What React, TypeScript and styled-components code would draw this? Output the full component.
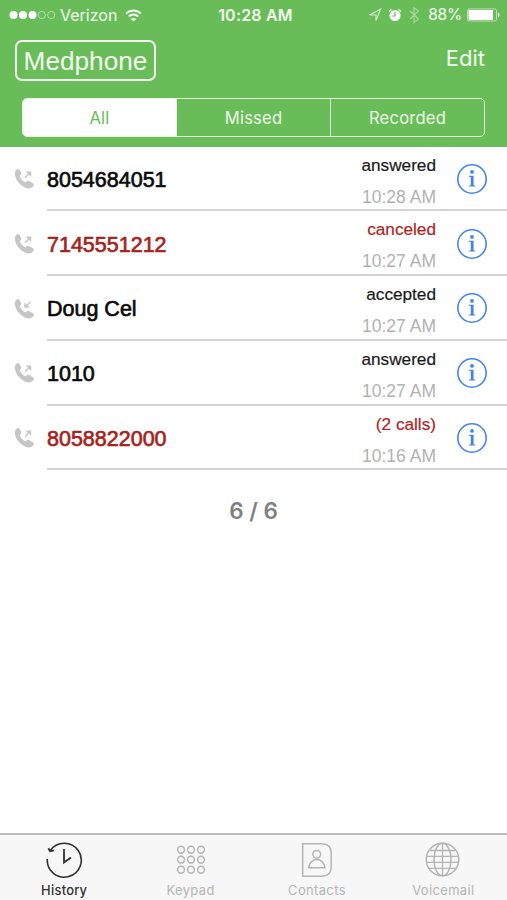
import React from 'react';
import styled, { createGlobalStyle } from 'styled-components';

const green = '#69bd58';

const GlobalStyle = createGlobalStyle`
  * { box-sizing: border-box; }
  body { margin: 0; background: #fff; }
`;

const Screen = styled.div`
  width: 507px;
  height: 900px;
  display: flex;
  flex-direction: column;
  overflow: hidden;
  background: #fff;
  font-family: Inter, sans-serif;
`;

const Header = styled.header`
  height: 146.5px;
  flex: none;
  background: ${green};
  color: #f4fbf1;
`;

const StatusBar = styled.div`
  height: 30px;
  display: grid;
  grid-template-columns: 1fr auto 1fr;
  align-items: center;
  padding: 0 7px 0 9px;
  font-size: 16px;
  line-height: 30px;
`;

const Carrier = styled.div`
  display: flex;
  align-items: center;
`;

const Signal = styled.svg`
  margin-right: 4px;
`;

const Wifi = styled.svg`
  margin-left: 8px;
`;

const Clock = styled.div`
  font-weight: 600;
  font-size: 16px;
  letter-spacing: 0.2px;
  padding: 0 0 0 2px;
`;

const Indicators = styled.div`
  display: flex;
  align-items: center;
  justify-content: flex-end;
`;

const LocationIcon = styled.svg`
  margin-right: 2px;
`;

const Percent = styled.span`
  font-size: 15.5px;
  letter-spacing: -0.2px;
  line-height: 30px;
  margin: 0 5px 0 6px;
`;

const TitleRow = styled.div`
  height: 67.5px;
  display: flex;
  justify-content: space-between;
  padding: 10px 22px 0 15px;
`;

const Brand = styled.div`
  width: 141px;
  height: 41px;
  border: 2px solid #f4fbf1;
  border-radius: 7px;
  font: 26.2px/38px 'Liberation Sans', sans-serif;
  text-align: center;
`;

const EditButton = styled.button`
  height: 36px;
  padding: 0;
  border: 0;
  background: none;
  color: inherit;
  font: 22px/36px Inter, sans-serif;
`;

const Segments = styled.div`
  display: grid;
  grid-template-columns: 153px 154px 1fr;
  width: 463px;
  height: 39.5px;
  margin-left: 22px;
  border: 1.5px solid #e6f5e1;
  border-radius: 5px;
  overflow: hidden;
`;

const Segment = styled.button<{ $active?: boolean }>`
  border: 0;
  border-left: ${p => (p.$active ? '0' : '1px solid #e6f5e1')};
  padding: 1px 0 0;
  background: ${p => (p.$active ? '#fff' : 'transparent')};
  color: ${p => (p.$active ? green : '#eef9ea')};
  font: 16.6px/37px Inter, sans-serif;
  letter-spacing: 0.2px;
`;

const CallList = styled.main`
  flex: 1;
`;

const Call = styled.div`
  height: 64.75px;
  display: flex;
  padding-left: 13px;
`;

const Direction = styled.svg`
  flex: none;
  margin: 20.5px 12px 0 0;
`;

const Details = styled.div`
  flex: 1;
  display: flex;
  align-items: center;
  border-bottom: 2px solid #d4d4d4;
  padding-right: 19px;
  font-family: 'Liberation Sans', sans-serif;
`;

const Name = styled.div<{ $alert?: boolean }>`
  flex: 1;
  padding-top: 5px;
  color: ${p => (p.$alert ? '#a8211b' : '#0a0a0a')};
  font-size: 21.5px;
  -webkit-text-stroke: 0.65px currentColor;
`;

const Meta = styled.div`
  height: 100%;
  padding-top: 2px;
  text-align: right;
  margin-right: 20px;
`;

const Status = styled.div<{ $alert?: boolean }>`
  font-size: 17.2px;
  line-height: 32px;
  color: ${p => (p.$alert ? '#b0241f' : '#1a1a1a')};
  -webkit-text-stroke: 0.2px currentColor;
`;

const Time = styled.div`
  font-size: 17.5px;
  line-height: 33px;
  color: #b2b2b2;
`;

const Info = styled.svg`
  margin-top: 2px;
`;

const Count = styled.div`
  margin-top: 27px;
  text-align: center;
  font-weight: 600;
  font-size: 22.5px;
  line-height: 28px;
  color: #808080;
`;

const TabBar = styled.nav`
  height: 67.5px;
  flex: none;
  display: grid;
  grid-template-columns: repeat(4, 126.4px);
  padding-left: 1px;
  border-top: 2.5px solid #bdbdbd;
  background: #f7f7f7;
`;

const Tab = styled.div<{ $active?: boolean }>`
  display: flex;
  flex-direction: column;
  align-items: center;
  padding-top: 5px;
  color: ${p => (p.$active ? '#303030' : '#b5b5b5')};
  font-size: 12.9px;
  font-weight: ${p => (p.$active ? 500 : 400)};
  line-height: 18px;
  letter-spacing: ${p => (p.$active ? '0.25px' : '0.4px')};
`;

const TabIcon = styled.svg`
  width: 40px;
  height: 40px;
  flex: none;
  margin-bottom: 2px;
  fill: none;
  stroke: currentColor;
  stroke-width: 1.5;
`;

function CallIcon({ incoming }: { incoming?: boolean }) {
  return (
    <Direction width="22" height="23" viewBox="0 0 22 23">
      <path
        fill="#c6c6c6"
        d="M3.2 2.2C4.3 1.3 5.3 1.7 6 3l1.3 2.5c.5 1 .2 1.8-.6 2.5l-.8.7c.7 2.7 3 5.1 5.8 6.4l.9-1c.7-.8 1.5-1 2.5-.4l4 2.3c1 .6 1.3 1.4.6 2.4-1.2 2-3.2 3.1-5.5 2.7C7.6 20.2 1.3 13 1 6.3 1 4.5 1.8 3.2 3.2 2.2z"
        transform="translate(.8 .3)"
      />
      {incoming ? (
        <g transform="translate(.5 .2)">
          <path d="M17 4.5l-4 4" stroke="#c6c6c6" strokeWidth="1.5" />
          <path d="M10.8 5v5.5h5.5z" fill="#c6c6c6" />
        </g>
      ) : (
        <g transform="translate(.5 .5)">
          <path d="M11.5 10.3l4-4" stroke="#c6c6c6" strokeWidth="1.5" />
          <path d="M12.2 4H17.7V9.5z" fill="#c6c6c6" />
        </g>
      )}
    </Direction>
  );
}

function InfoIcon() {
  return (
    <Info width="32" height="32" viewBox="0 0 32 32">
      <circle cx="16" cy="16" r="14.2" fill="none" stroke="#4285ea" strokeWidth="1.6" />
      <circle cx="16" cy="8.9" r="1.9" fill="#4285ea" />
      <path d="M12.7 12.8h4.9v9.5l1.8.5v.8h-6.6v-.8l2-.5v-8.3l-2.1-.4z" fill="#4285ea" />
    </Info>
  );
}

const calls = [
  { name: '8054684051', status: 'answered', time: '10:28 AM' },
  { name: '7145551212', status: 'canceled', time: '10:27 AM', alert: true },
  { name: 'Doug Cel', status: 'accepted', time: '10:27 AM', incoming: true },
  { name: '1010', status: 'answered', time: '10:27 AM' },
  { name: '8058822000', status: '(2 calls)', time: '10:16 AM', alert: true },
];

export default function App() {
  return (
    <>
      <GlobalStyle />
      <Screen>
        <Header>
          <StatusBar>
            <Carrier>
              <Signal width="47" height="10" viewBox="0 0 47 10">
                {[4.5, 14, 23.5].map(x => <circle key={x} cx={x} cy="5" r="4" fill="#fff" />)}
                {[32.8, 42.2].map(x => (
                  <circle key={x} cx={x} cy="5" r="3.6" fill="none" stroke="#c5e7bd" strokeWidth=".8" />
                ))}
              </Signal>
              Verizon
              <Wifi width="17" height="13" viewBox="0 0 17 13" fill="none" stroke="#f4fbf1" strokeWidth="2">
                <path d="M1 4.6c4.5-4 10.5-4 15 0M3.7 7.6c2.9-2.5 6.7-2.5 9.6 0" />
                <path d="M8.5 12.5L5.8 9.9c1.6-1.3 3.8-1.3 5.4 0z" fill="#f4fbf1" stroke="none" />
              </Wifi>
            </Carrier>
            <Clock>10:28 AM</Clock>
            <Indicators>
              <LocationIcon width="14" height="14" viewBox="0 0 14 14" fill="none" stroke="#d5efcf" strokeWidth="1.1">
                <path d="M12.5 1.2L8 12.5V7H1.5z" />
              </LocationIcon>
              <svg width="18" height="16" viewBox="0 0 18 16">
                <circle cx="11" cy="8.5" r="5.6" fill="#f8fdf6" />
                <path d="M5 4.5l2.5-2.3M14.5 2.2L17 4.5" stroke="#e5f5e1" strokeWidth="1.3" />
                <path d="M11 5v4H8.5" fill="none" stroke={green} strokeWidth="1.2" />
              </svg>
              <svg width="20" height="18" viewBox="0 0 20 18" fill="none" stroke="#a9daa0" strokeWidth="1.1">
                <path d="M8 5l8.5 8L12 16.5v-15L16.5 5 8 13" />
              </svg>
              <Percent>88%</Percent>
              <svg width="33" height="14" viewBox="0 0 33 14">
                <rect x=".5" y="1" width="29" height="12" rx="1.5" fill="none" stroke="#b9e0b1" />
                <rect x="1.5" y="2" width="24.5" height="10" fill="#fff" />
                <path d="M31 4.5c2 1 2 4 0 5z" fill="#f4fbf1" />
              </svg>
            </Indicators>
          </StatusBar>
          <TitleRow>
            <Brand>Medphone</Brand>
            <EditButton>Edit</EditButton>
          </TitleRow>
          <Segments>
            <Segment $active>All</Segment>
            <Segment>Missed</Segment>
            <Segment>Recorded</Segment>
          </Segments>
        </Header>
        <CallList>
          {calls.map(call => (
            <Call key={call.name}>
              <CallIcon incoming={call.incoming} />
              <Details>
                <Name $alert={call.alert}>{call.name}</Name>
                <Meta>
                  <Status $alert={call.alert}>{call.status}</Status>
                  <Time>{call.time}</Time>
                </Meta>
                <InfoIcon />
              </Details>
            </Call>
          ))}
          <Count>6 / 6</Count>
        </CallList>
        <TabBar>
          <Tab $active>
            <TabIcon viewBox="0 0 40 40">
              <path d="M3.3 19A17 17 0 1 0 6.5 10.2" strokeWidth="1.6" />
              <path d="M4.3 8.3l1.8 3 3.8-1M20 9v13.5l7-5" strokeWidth="1.8" />
            </TabIcon>
            History
          </Tab>
          <Tab>
            <TabIcon viewBox="0 0 40 40">
              {[9.7, 19.7, 29.7].map(y => [10, 20, 30].map(x => <circle key={`${x}-${y}`} cx={x} cy={y} r="3.4" />))}
            </TabIcon>
            Keypad
          </Tab>
          <Tab>
            <TabIcon viewBox="0 0 40 40">
              <path d="M5.7 3.7h19q9.500 0 9.500 9.500v13.500q0 9.500-9.500 9.500h-19z" />
              <circle cx="19.7" cy="14.3" r="3.9" />
              <path d="M11.800 27.800c1-11 15-11 16 0z" />
            </TabIcon>
            Contacts
          </Tab>
          <Tab>
            <TabIcon viewBox="0 0 40 40">
              <circle cx="19.5" cy="19.5" r="16.3" />
              <ellipse cx="19.5" cy="19.5" rx="8.5" ry="16.3" />
              <path d="M19.5 3.5v32.5M6.5 10.5h26M3.7 16.3h31.6M3.7 22.3h31.6M6 28.3h27" strokeWidth="1.3" />
            </TabIcon>
            Voicemail
          </Tab>
        </TabBar>
      </Screen>
    </>
  );
}
